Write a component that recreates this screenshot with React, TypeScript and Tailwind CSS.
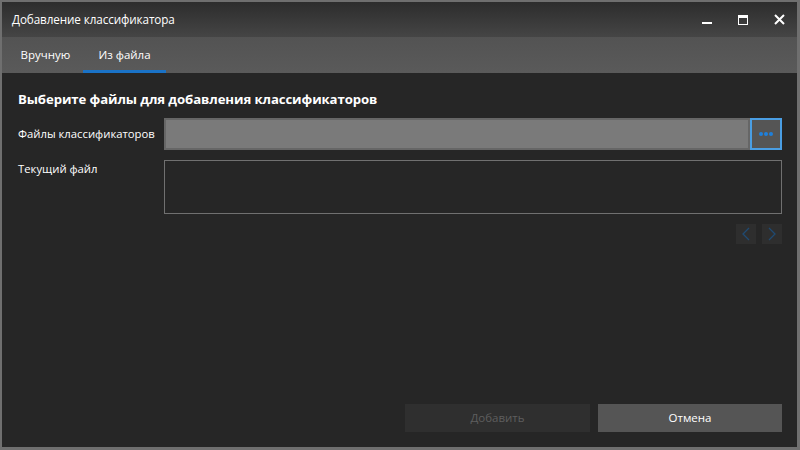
import React from 'react';

const font = { fontFamily: '"Open Sans", "Noto Sans", sans-serif' };

const App: React.FC = () => {
  return (
    <div
      className="w-[800px] h-[450px] bg-[#6f6f6f] pt-[2px] pl-[2px] pr-[3px] pb-[3px] text-white"
      style={font}
    >
      <div className="flex flex-col w-full h-full bg-[#262626]">
        {/* title bar */}
        <div className="h-[35px] flex items-center bg-gradient-to-b from-[#2d2d2d] to-[#454545] pl-[10px]">
          <span className="text-[11.7px] tracking-[-0.1px]">Добавление классификатора</span>
          <div className="ml-auto flex items-center h-full">
            <div className="w-[36px] h-full flex items-center justify-center">
              <div className="w-[10px] h-[2px] bg-white mt-[6px]" />
            </div>
            <div className="w-[36px] h-full flex items-center justify-center">
              <div className="w-[10px] h-[10px] border border-white border-t-[3px]" />
            </div>
            <div className="w-[36px] h-full flex items-center justify-center">
              <svg width="11" height="11" viewBox="0 0 11 11">
                <path d="M1 1L10 10M10 1L1 10" stroke="white" strokeWidth="2" />
              </svg>
            </div>
          </div>
        </div>

        {/* tabs */}
        <div className="h-[36px] flex bg-gradient-to-b from-[#535353] to-[#5a5a5a] pl-[6px]">
          <div className="w-[75px] flex items-center justify-center text-[11.5px]">Вручную</div>
          <div className="w-[83px] flex items-center justify-center text-[11.5px] border-b-[3px] border-[#1a72c6] pt-[3px]">
            Из файла
          </div>
        </div>

        {/* content */}
        <div className="flex-1 flex flex-col pl-[16px] pr-[15px] pt-[16px] pb-[15px]">
          <div className="text-[13.2px] font-bold tracking-[-0.1px] leading-[20px]">
            Выберите файлы для добавления классификаторов
          </div>

          <div className="flex mt-[9px] h-[32px]">
            <div className="w-[146px] flex items-center text-[11.3px]">Файлы классификаторов</div>
            <div className="flex-1 bg-[#7a7a7a] border-2 border-[#666666]" />
            <div className="w-[32px] bg-[#555555] border-2 border-[#4a9ee3] flex items-center justify-center gap-[1px]">
              <span className="w-[4px] h-[4px] rounded-full bg-[#1e80dc]" />
              <span className="w-[4px] h-[4px] rounded-full bg-[#1e80dc]" />
              <span className="w-[4px] h-[4px] rounded-full bg-[#1e80dc]" />
            </div>
          </div>

          <div className="flex mt-[10px] h-[54px]">
            <div className="w-[146px] text-[11.3px] pt-[1px]">Текущий файл</div>
            <div className="flex-1 border border-[#707070]" />
          </div>

          <div className="flex justify-end gap-[6px] mt-[10px]">
            <div className="w-[20px] h-[20px] bg-[#2e2e2e] flex items-center justify-center">
              <svg width="10" height="14" viewBox="0 0 10 14">
                <path d="M8 1L2 7L8 13" stroke="#1f4a72" strokeWidth="1.3" fill="none" />
              </svg>
            </div>
            <div className="w-[20px] h-[20px] bg-[#2e2e2e] flex items-center justify-center">
              <svg width="10" height="14" viewBox="0 0 10 14">
                <path d="M2 1L8 7L2 13" stroke="#1f4a72" strokeWidth="1.3" fill="none" />
              </svg>
            </div>
          </div>

          <div className="mt-auto flex justify-end gap-[8px]">
            <div className="w-[185px] h-[28px] bg-[#2f2f2f] flex items-center justify-center text-[11.5px] text-[#5e5e5e]">
              Добавить
            </div>
            <div className="w-[184px] h-[28px] bg-[#555555] flex items-center justify-center text-[11.5px]">
              Отмена
            </div>
          </div>
        </div>
      </div>
    </div>
  );
};

export default App;
